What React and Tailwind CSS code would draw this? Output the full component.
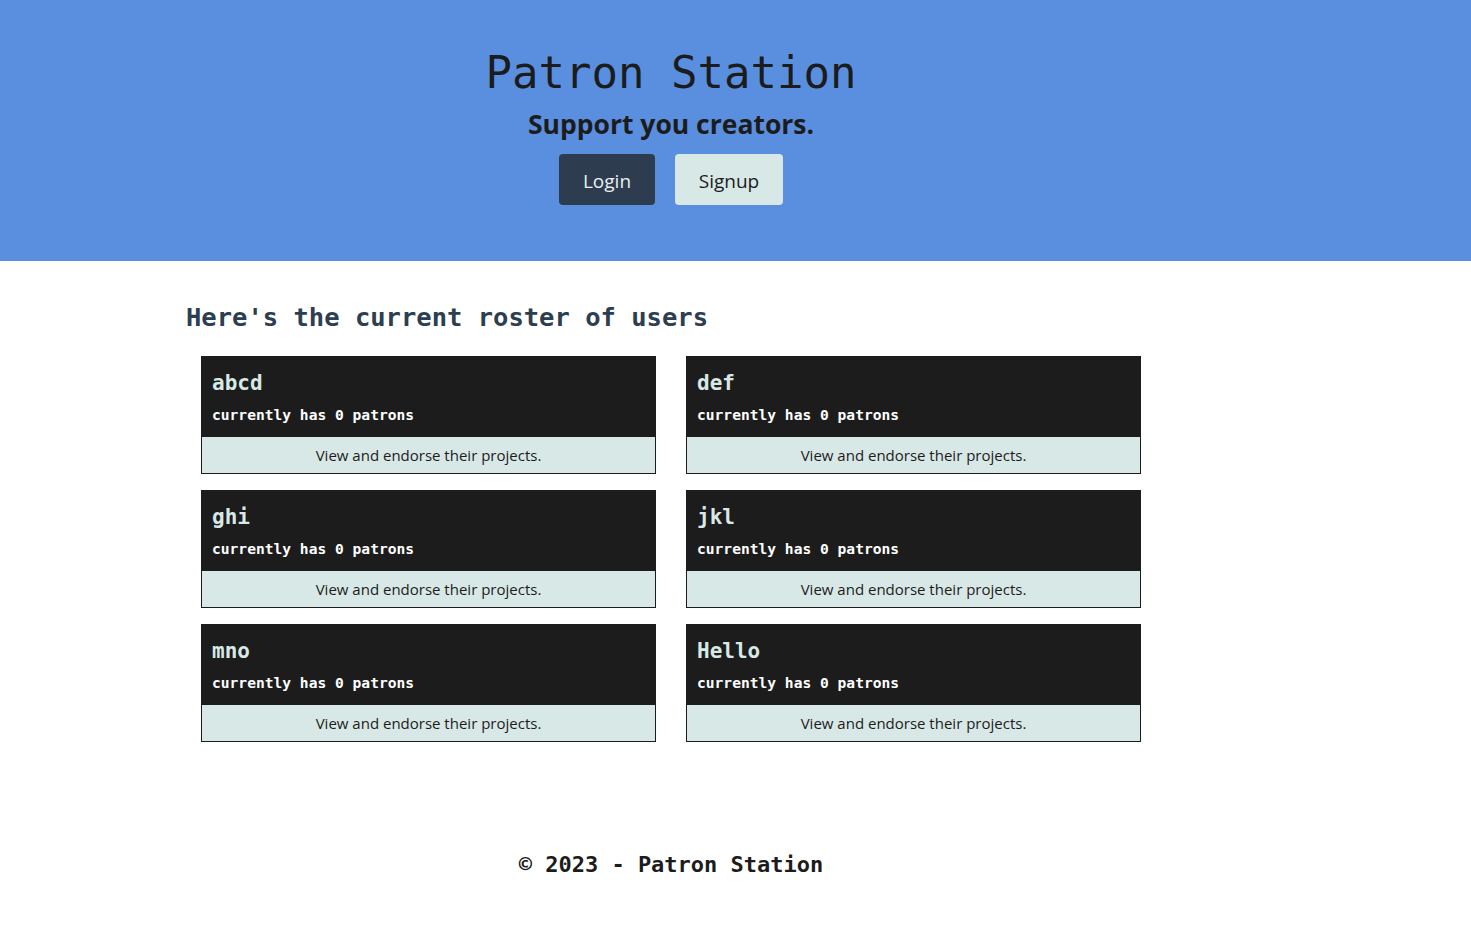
const USERS = ['abcd', 'def', 'ghi', 'jkl', 'mno', 'Hello'];

const mono = "font-['DejaVu_Sans_Mono',monospace]";
const sans = "font-['Open_Sans','Noto_Sans',sans-serif]";

function UserCard({ name }) {
  return (
    <div className="border border-[#1c1c1c] bg-[#d8e8e6]">
      <div className="bg-[#1c1c1c] h-[80px] px-[10px] pt-[12px]">
        <h3 className={`${mono} text-[21px] leading-[28px] font-bold text-[#d8e8e6]`}>{name}</h3>
        <p className={`${mono} text-[14.6px] leading-[18px] font-bold text-white mt-[9px]`}>currently has 0 patrons</p>
      </div>
      <div className={`${sans} h-[36px] flex items-center justify-center text-[15px] text-[#1c1c1c]`}>
        View and endorse their projects.
      </div>
    </div>
  );
}

export default function App() {
  return (
    <div className="min-h-screen bg-white">
      {/* Hero */}
      <header className="bg-[#5a8fe0] h-[261px]">
        <div className="w-[1342px] flex flex-col items-center pt-[45px]">
          <h1 className={`${mono} text-[44px] leading-[56px] text-[#1c1c1c]`}>Patron Station</h1>
          <p className={`${sans} text-[26.5px] leading-[34px] font-bold text-[#1c1c1c] mt-[6px]`}>Support you creators.</p>
          <div className="flex gap-[20px] mt-[13px]">
            <button className={`${sans} w-[96px] h-[51px] rounded-[4px] bg-[#2e3c50] text-[#e8f0f0] text-[19px] pt-[3px]`}>Login</button>
            <button className={`${sans} w-[108px] h-[51px] rounded-[4px] bg-[#d8e8e6] text-[#1c1c1c] text-[19px] pt-[3px]`}>Signup</button>
          </div>
        </div>
      </header>

      <div className="w-[1342px]">
        <main className="w-[970px] mx-auto pt-[38px]">
          <h2 className={`${mono} text-[25.5px] leading-[36px] font-bold text-[#2c3e50]`}>Here's the current roster of users</h2>
          <div className="grid grid-cols-2 gap-x-[30px] gap-y-[16px] px-[15px] mt-[21px]">
            {USERS.map((u) => (
              <UserCard key={u} name={u} />
            ))}
          </div>
        </main>

        <footer className="flex justify-center pt-[108px] pb-[40px]">
          <p className={`${mono} text-[22px] leading-[30px] font-bold text-[#1c1c1c]`}>© 2023 - Patron Station</p>
        </footer>
      </div>
    </div>
  );
}
